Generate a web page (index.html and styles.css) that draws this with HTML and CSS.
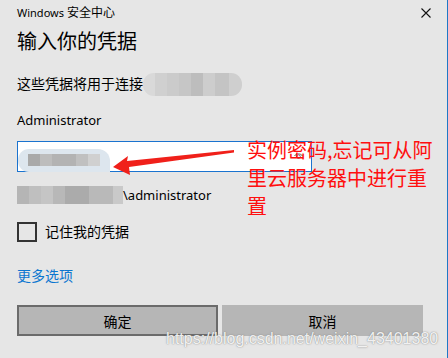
FILE: index.html
```html
<!DOCTYPE html>
<html lang="zh-CN">
<head>
<meta charset="utf-8">
<title>Windows 安全中心</title>
<link rel="stylesheet" href="styles.css">
</head>
<body>
<div class="dialog">
  <div class="titlebar">
    <span class="title"><span class="lat-sm">Windows</span> 安全中心</span>
    <svg class="close" width="10" height="10" viewBox="0 0 10 10"><path d="M0.5 0.5 L9.5 9.5 M9.5 0.5 L0.5 9.5" stroke="#111" stroke-width="1.1" fill="none"/></svg>
  </div>
  <h1 class="heading">输入你的凭据</h1>
  <div class="host-row"><span>这些凭据将用于连接</span><span class="host-blur"></span></div>
  <div class="user-label">Administrator</div>
  <div class="input">
    <span class="pw-blur"><span class="pw-mosaic"></span></span>
    <svg class="eye" width="9" height="8" viewBox="0 0 9 8"><path d="M0.5 4 C2 1.2 7 1.2 8.5 4" stroke="#666" fill="none" stroke-width="1"/><circle cx="4.5" cy="4.6" r="1.8" stroke="#666" fill="none" stroke-width="1"/></svg>
  </div>
  <div class="account-row"><span class="acct-blur"></span><span class="acct">\administrator</span></div>
  <div class="remember"><span class="checkbox"></span><span>记住我的凭据</span></div>
  <div class="more-row"><a class="more">更多选项</a></div>
  <div class="buttons">
    <button class="btn primary">确定</button>
    <button class="btn">取消</button>
  </div>
  <svg class="arrow" width="448" height="358" viewBox="0 0 448 358">
    <polygon points="113,167 128,156 127,161 234,150 234,152.5 129,167 130,175" fill="#f0201a"/>
  </svg>
  <div class="note">实例密码,忘记可从阿<br>里云服务器中进行重<br>置</div>
  <div class="watermark">https://blog.csdn.net/weixin_43401380</div>
</div>
</body>
</html>
```
FILE: styles.css
```css
html, body {
  margin: 0;
  padding: 0;
  background: #e6e6e6;
}
.dialog {
  position: relative;
  box-sizing: border-box;
  width: 448px;
  height: 358px;
  padding-left: 17px;
  border-right: 1px solid #1f78c6;
  background: #e6e6e6;
  font-family: "Noto Sans", "Noto Sans CJK SC", sans-serif;
  font-size: 14px;
  color: #000;
  overflow: hidden;
}
.titlebar {
  display: flex;
  justify-content: space-between;
  align-items: center;
  height: 26px;
  padding-right: 16px;
}
.title {
  font-size: 12px;
  line-height: 16px;
}
.lat-sm { font-size: 11px; }
.close { display: block; }
.heading {
  margin: 2px 0 0;
  font-size: 20px;
  font-weight: 400;
  line-height: 28px;
}
.host-row {
  display: flex;
  align-items: center;
  height: 24px;
  margin-top: 16px;
  line-height: 20px;
}
.host-blur {
  display: block;
  width: 99px;
  height: 23px;
  border-radius: 11px;
  background: linear-gradient(to right, #d9d9d9 0 12px, #d0d0d0 12px 24px, #cbcbcb 24px 36px, #c6c6c6 36px 48px, #bdbdbd 48px 60px, #cdcdcd 60px 72px, #c4c4c4 72px 86px, #cfcfcf 86px);
}
.user-label {
  margin-top: 14px;
  font-size: 13px;
  line-height: 20px;
}
.input {
  box-sizing: border-box;
  display: flex;
  align-items: flex-start;
  justify-content: space-between;
  width: 295px;
  height: 31px;
  margin-top: 11px;
  border: 1px solid #1a73cf;
  background: #fff;
}
.pw-blur {
  display: block;
  width: 92px;
  height: 23px;
  margin-top: 7px;
  border-radius: 11px 12px 0 11px;
  background: #dde6ee;
  padding: 5px 0 0 10px;
  box-sizing: border-box;
}
.pw-mosaic {
  display: block;
  width: 72px;
  height: 12px;
  background: linear-gradient(to right, #a9a9a9 0 12px, #bdbdbd 12px 24px, #b3b3b3 24px 48px, #c0c0c0 48px 60px, #d0d0d0 60px);
}
.eye {
  display: block;
  margin: 10px 8px 0 0;
}
.account-row {
  display: flex;
  align-items: center;
  height: 20px;
  margin-top: 13px;
}
.acct-blur {
  display: block;
  width: 106px;
  height: 18px;
  background: linear-gradient(to right, #b5b5b5 0 12px, #bfbfbf 12px 24px, #c5c5c5 24px 36px, #b8b8b8 36px 48px, #ababab 48px 72px, #b9b9b9 72px 96px, #c9c9c9 96px);
}
.acct {
  font-size: 13px;
  line-height: 20px;
}
.remember {
  display: flex;
  align-items: center;
  gap: 8px;
  height: 20px;
  margin-top: 17px;
  line-height: 20px;
}
.checkbox {
  box-sizing: border-box;
  display: block;
  width: 20px;
  height: 20px;
  border: 2px solid #333;
}
.more-row {
  margin-top: 24px;
  line-height: 20px;
}
.more {
  color: #0b76d0;
  text-decoration: none;
}
.buttons {
  display: flex;
  gap: 4px;
  margin-top: 19px;
}
.btn {
  box-sizing: border-box;
  width: 201px;
  height: 31px;
  border: 2px solid #b6b6b6;
  background: #b6b6b6;
  font-family: "Noto Sans", "Noto Sans CJK SC", sans-serif;
  font-size: 14px;
  color: #000;
  padding: 0;
}
.btn.primary {
  border-color: #6b6b6b;
}
.arrow {
  position: absolute;
  left: 0;
  top: 0;
  pointer-events: none;
}
.note {
  position: absolute;
  left: 247px;
  top: 136px;
  font-family: "Noto Sans CJK SC", sans-serif;
  font-size: 20px;
  line-height: 28px;
  color: #ff0f0f;
  white-space: nowrap;
}
.watermark {
  position: absolute;
  left: 166px;
  top: 330px;
  font-family: "Liberation Sans", sans-serif;
  font-size: 16px;
  line-height: 18px;
  color: rgba(255, 255, 255, 0.9);
  text-shadow: 0 0 1px rgba(110, 110, 110, 0.8), 0 0 2px rgba(150, 150, 150, 0.5);
  white-space: nowrap;
}
```
